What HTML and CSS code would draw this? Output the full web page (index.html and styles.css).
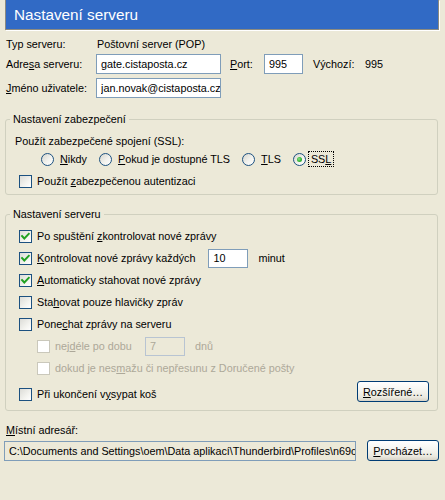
FILE: index.html
```html
<!DOCTYPE html>
<html lang="cs">
<head>
<meta charset="utf-8">
<title>Nastavení serveru</title>
<link rel="stylesheet" href="styles.css">
</head>
<body>
<div class="header"><span>Nastavení serveru</span></div>

<div class="top">
  <div class="row">
    <span class="lbl">Typ serveru:</span>
    <span class="val">Poštovní server (POP)</span>
  </div>
  <div class="row">
    <span class="lbl">Adre<u>s</u>a serveru:</span>
    <div class="field w-host">gate.cistaposta.cz</div>
    <span class="port-lbl"><u>P</u>ort:</span>
    <div class="field w-port">995</div>
    <span class="def-lbl">Výchozí:</span>
    <span>995</span>
  </div>
  <div class="row row-gap">
    <span class="lbl"><u>J</u>méno uživatele:</span>
    <div class="field w-host"><span class="clip">jan.novak@cistaposta.cz</span></div>
  </div>
</div>

<fieldset class="group g-sec">
  <legend>Nastavení zabezpečení</legend>
  <div class="line first">Použít zabezpečené spojení (SSL):</div>
  <div class="line radios">
    <span class="opt"><span class="rb"></span><span><u>N</u>ikdy</span></span>
    <span class="opt"><span class="rb"></span><span><u>P</u>okud je dostupné TLS</span></span>
    <span class="opt"><span class="rb"></span><span><u>T</u>LS</span></span>
    <span class="opt"><span class="rb on"></span><span class="focus">SS<u>L</u></span></span>
  </div>
  <div class="line cbline gap4">
    <span class="cb"></span><span>Použít <u>z</u>abezpečenou autentizaci</span>
  </div>
</fieldset>

<fieldset class="group g-srv">
  <legend>Nastavení serveru</legend>
  <div class="rows">
    <div class="crow">
      <span class="cb"><svg viewBox="0 0 11 11"><polyline points="2,5 4.3,7.5 8.8,2.8"/></svg></span>
      <span>Po spuštění <u>z</u>kontrolovat nové zprávy</span>
    </div>
    <div class="crow">
      <span class="cb"><svg viewBox="0 0 11 11"><polyline points="2,5 4.3,7.5 8.8,2.8"/></svg></span>
      <span><u>K</u>ontrolovat nové zprávy každých</span>
      <div class="field w-num m-num">10</div>
      <span class="unit">minut</span>
    </div>
    <div class="crow">
      <span class="cb"><svg viewBox="0 0 11 11"><polyline points="2,5 4.3,7.5 8.8,2.8"/></svg></span>
      <span><u>A</u>utomaticky stahovat nové zprávy</span>
    </div>
    <div class="crow">
      <span class="cb"></span>
      <span>Sta<u>h</u>ovat pouze hlavičky zpráv</span>
    </div>
    <div class="crow">
      <span class="cb"></span>
      <span>Pone<u>c</u>hat zprávy na serveru</span>
    </div>
    <div class="crow sub dis">
      <span class="cb"></span>
      <span>nej<u>d</u>éle po dobu</span>
      <div class="field w-num m-days">7</div>
      <span class="unit">dnů</span>
    </div>
    <div class="crow sub dis">
      <span class="cb"></span>
      <span>dokud je nes<u>m</u>ažu či nepřesunu z Doručené pošty</span>
    </div>
    <div class="crow last">
      <span class="cb"></span>
      <span>Při ukončení v<u>y</u>sypat koš</span>
      <span class="btn btn-adv"><u>R</u>ozšířené…</span>
    </div>
  </div>
</fieldset>

<div class="local">
  <div class="local-lbl"><u>M</u>ístní adresář:</div>
  <div class="local-row">
    <div class="field path"><span class="clip">C:\Documents and Settings\oem\Data aplikací\Thunderbird\Profiles\n69c</span></div>
    <span class="btn btn-browse"><u>P</u>rocházet…</span>
  </div>
</div>
</body>
</html>
```

FILE: styles.css
```css
html, body {
  margin: 0;
  padding: 0;
}
body {
  width: 445px;
  height: 500px;
  overflow: hidden;
  background: #ece9d8;
  color: #000;
  font-family: "Liberation Sans", Arial, sans-serif;
  font-size: 10.8px;
}
u { text-decoration: underline; text-underline-offset: 1px; }

.header {
  box-sizing: border-box;
  margin-left: 5px;
  width: 434px;
  height: 30px;
  background: #316ac5;
  border: 1px solid #8b8a80;
  border-top: none;
  box-shadow: 1px 1px 0 #fff;
  color: #fff;
  font-size: 15.3px;
  display: flex;
  align-items: center;
  padding-left: 8px;
  padding-top: 1px;
}

.top {
  padding: 4px 0 0 6px;
}
.row {
  display: flex;
  align-items: center;
  height: 20px;
}
.row-gap { margin-top: 4px; }
.lbl { width: 90px; flex: none; }
.val { padding-left: 1px; }

.field {
  box-sizing: border-box;
  height: 20px;
  border: 1px solid #7f9db9;
  background: #fff;
  padding: 0 4px;
  display: flex;
  align-items: center;
  overflow: hidden;
  white-space: nowrap;
  flex: none;
}
.clip {
  display: block;
  overflow: hidden;
  white-space: nowrap;
  min-width: 0;
  flex: 1 1 auto;
}
.w-host { width: 125px; padding-right: 0; }
.w-port { width: 39px; }
.port-lbl { margin-left: 9px; width: 34px; }
.def-lbl { margin-left: 10px; width: 52px; }

.group {
  margin: 14px 7px 0 5px;
  padding: 0 0 4px 9px;
  border: 1px solid #d0d0bf;
  border-radius: 3px;
  min-width: 0;
}
.group legend {
  padding: 0 3px;
  margin-left: -5px;
  line-height: 14px;
}
.g-srv { margin-top: 12px; padding-bottom: 5px; }

.line {
  display: flex;
  align-items: center;
  height: 18px;
}
.first { margin-top: 6px; }
.gap4 { margin-top: 4px; }
.radios {
  margin-left: 26px;
  gap: 12px;
}
.opt {
  display: flex;
  align-items: center;
  gap: 6px;
}
.cbline { margin-left: 4px; gap: 5px; }

.rb {
  box-sizing: border-box;
  width: 13px;
  height: 13px;
  border-radius: 50%;
  border: 1px solid #1c5180;
  background: linear-gradient(135deg, #d6d5cc 0%, #f2f2ee 55%, #fff 100%);
  display: flex;
  align-items: center;
  justify-content: center;
  flex: none;
}
.rb.on::after {
  content: "";
  width: 5px;
  height: 5px;
  border-radius: 50%;
  background: radial-gradient(circle at 40% 40%, #8be38b 0%, #38b838 50%, #1e9a1e 100%);
}
.focus {
  outline: 1px dotted #000;
  padding: 1px 2px 1px 2px;
  margin-left: -3px;
}

.cb {
  box-sizing: border-box;
  width: 13px;
  height: 13px;
  border: 1px solid #1c5180;
  background: linear-gradient(135deg, #dcdcd7 0%, #f3f3ef 60%, #fff 100%);
  flex: none;
  display: block;
}
.cb svg {
  display: block;
  width: 11px;
  height: 11px;
}
.cb polyline {
  fill: none;
  stroke: #21a121;
  stroke-width: 1.9;
  stroke-linecap: square;
}

.rows {
  padding-top: 4px;
}
.crow {
  display: flex;
  align-items: center;
  height: 22px;
  margin-left: 4px;
  gap: 5px;
}
.crow.sub { margin-left: 22px; }
.dis { color: #aca899; }
.dis .cb {
  border-color: #cac8bb;
  background: #fff;
}
.w-num { width: 40px; height: 19px; }
.m-num { margin-left: 8px; }
.m-days { margin-left: 8px; }
.unit { margin-left: 5px; }
.dis .field {
  background: #ece9d8;
  border-color: #b8c4d2;
  color: #aca899;
}
.crow.last {
  margin-top: 4px;
}

.btn {
  box-sizing: border-box;
  height: 21px;
  border: 1px solid #003c74;
  border-radius: 3px;
  background: linear-gradient(#ffffff 0%, #f6f6f2 40%, #ebe9df 80%, #d8d3c7 100%);
  display: flex;
  align-items: center;
  justify-content: center;
  flex: none;
  white-space: nowrap;
}
.btn-adv {
  width: 72px;
  margin-left: auto;
  margin-right: 8px;
  align-self: flex-start;
  margin-top: -2px;
}

.local {
  padding-left: 4px;
}
.local-lbl {
  margin-top: 10px;
  margin-left: 2px;
  height: 18px;
  display: flex;
  align-items: center;
}
.local-row {
  margin-top: 1px;
  display: flex;
  align-items: flex-start;
}
.path {
  width: 352px;
  margin-top: 1px;
  background: #ece9d8;
  padding-right: 0;
}
.btn-browse {
  width: 72px;
  margin-left: 11px;
}
```
